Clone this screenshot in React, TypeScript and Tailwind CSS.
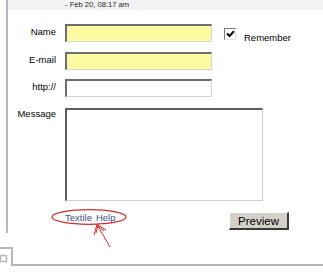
import React from 'react';

const frame = 'border-[#b3b7c2]';

const Field = ({ label, yellow }: { label: string; yellow?: boolean }) => (
  <div className="flex items-start h-[18px]">
    <span className="w-[48px] text-right pt-[2px] leading-[12px]">{label}</span>
    <input
      type="text"
      className={`ml-[9px] w-[147px] h-[18px] border-t-2 border-l-2 border-t-[#6e6e6e] border-l-[#6e6e6e] border-r border-b border-r-[#d6d6d6] border-b-[#d6d6d6] outline-none ${
        yellow ? 'bg-[#fdfba2]' : 'bg-white'
      }`}
    />
  </div>
);

export default function App() {
  return (
    <div className="w-[323px] h-[273px] bg-white overflow-hidden text-[9.5px] text-black [font-family:'Liberation_Sans',Arial,sans-serif]">
      <div className={`ml-[6px] h-[233px] border-l-2 ${frame} flex flex-col`}>
        <div className="h-[10px] bg-[#f3f3f3] pl-[57px] text-[7.6px] leading-[10px] text-[#222]">
          - Feb 20, 08:17 am
        </div>

        <div className="mt-[14px] flex flex-col gap-[8px]">
          <div className="flex items-start">
            <Field label="Name" yellow />
            <span className="ml-[12px] mt-[4px] w-[12px] h-[12px] bg-white border-t border-l border-[#7a7a7a] border-r border-b border-r-[#e4e4e4] border-b-[#e4e4e4] flex items-center justify-center">
              <svg width="9" height="8" viewBox="0 0 9 8">
                <path d="M1 3.5 L3.5 6 L8 1.2" fill="none" stroke="#000" strokeWidth="2" />
              </svg>
            </span>
            <span className="ml-[8px] mt-[8px] leading-[12px]">Remember</span>
          </div>
          <Field label="E-mail" yellow />
        </div>

        <div className="mt-[9px]">
          <Field label="http://" />
        </div>

        <div className="mt-[11px] flex items-start">
          <span className="w-[48px] text-right leading-[12px]">Message</span>
          <textarea className="ml-[9px] w-[198px] h-[93px] resize-none bg-white border-t-2 border-l-2 border-t-[#5e5e5e] border-l-[#5e5e5e] border-r border-b border-r-[#d0d0d0] border-b-[#d0d0d0] outline-none" />
        </div>

        <div className="mt-[9px] ml-[57px] w-[224px] flex justify-between items-start">
          <a className="relative mt-[2px] leading-[12px] text-[#3a4c85]">
            Textile<span className="ml-[4px]">Help</span>
            <svg className="absolute left-[-14px] top-[-3px]" width="78" height="42" viewBox="0 0 78 42" fill="none">
              <ellipse cx="38" cy="8" rx="37" ry="7.3" stroke="#d42a2a" strokeWidth="1.2" />
              <path d="M46 15.5 L59 38" stroke="#d42a2a" strokeWidth="1" />
              <path d="M46 15.5 L43 26 M46 15.5 L55 21 M47 16.5 L45 24 M47 16.5 L53 22" stroke="#d42a2a" strokeWidth="1" />
            </svg>
          </a>
          <button className="mt-[2px] w-[60px] h-[18px] bg-[#d4d0c8] border-t border-l border-t-white border-l-white border-r-2 border-b-2 border-r-[#3a3a3a] border-b-[#3a3a3a] text-[11.5px] leading-[14px] text-black">
            Preview
          </button>
        </div>
      </div>

      <div className="mt-[14px] flex items-end h-[19px]">
        <svg width="13" height="19" viewBox="0 0 13 19" className="shrink-0">
          <path d="M0 1 H12 V19" fill="none" stroke="#b3b7c2" strokeWidth="2" />
          <rect x="0.5" y="8.5" width="6" height="6" fill="none" stroke="#b3b7c2" strokeWidth="1.5" />
        </svg>
        <div className={`flex-1 border-b-2 ${frame}`} />
      </div>
    </div>
  );
}
